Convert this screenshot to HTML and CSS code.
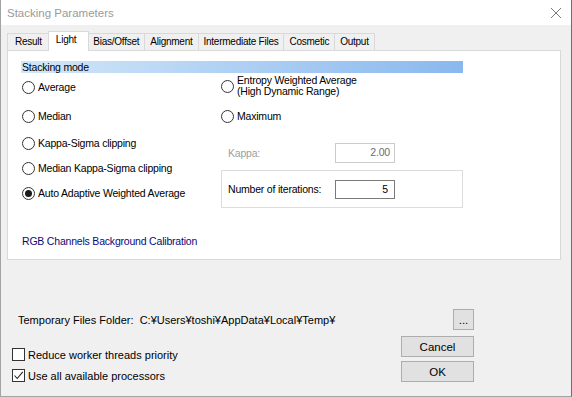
FILE: index.html
```html
<!DOCTYPE html>
<html lang="en">
<head>
  <meta charset="UTF-8">
  <title>Stacking Parameters</title>
  <link rel="stylesheet" href="styles.css">
</head>
<body>
  <div class="window">
    <div class="titlebar">
      <span class="title">Stacking Parameters</span>
      <svg class="close" width="12" height="12" viewBox="0 0 12 12">
        <path d="M1 1 L11 11 M11 1 L1 11" stroke="#7a7a7a" stroke-width="1" fill="none"/>
      </svg>
    </div>

    <div class="client">
      <div class="tabs">
        <div class="tab">Result</div>
        <div class="tab active">Light</div>
        <div class="tab">Bias/Offset</div>
        <div class="tab">Alignment</div>
        <div class="tab">Intermediate Files</div>
        <div class="tab">Cosmetic</div>
        <div class="tab">Output</div>
      </div>

      <div class="panel">
        <div class="section-head">Stacking mode</div>

        <div class="modes">
          <div class="col-left">
            <label class="radio"><span class="circle"></span>Average</label>
            <label class="radio"><span class="circle"></span>Median</label>
            <label class="radio"><span class="circle"></span>Kappa-Sigma clipping</label>
            <label class="radio"><span class="circle"></span>Median Kappa-Sigma clipping</label>
            <label class="radio checked"><span class="circle"></span>Auto Adaptive Weighted Average</label>
          </div>

          <div class="col-right">
            <label class="radio two-line">
              <span class="circle"></span>
              <span>Entropy Weighted Average<br>(High Dynamic Range)</span>
            </label>
            <label class="radio maximum"><span class="circle"></span>Maximum</label>

            <div class="field-row kappa">
              <span class="field-label disabled">Kappa:</span>
              <span class="field-input disabled">2.00</span>
            </div>

            <div class="group-box">
              <span class="field-label">Number of iterations:</span>
              <span class="field-input">5</span>
            </div>
          </div>
        </div>

        <div class="link">RGB Channels Background Calibration</div>
      </div>

      <div class="footer">
        <div class="temp-folder">Temporary Files Folder:&nbsp; C:¥Users¥toshi¥AppData¥Local¥Temp¥</div>
        <button class="btn btn-small">...</button>

        <div class="checks">
          <label class="check"><span class="box"></span>Reduce worker threads priority</label>
          <label class="check checked">
            <span class="box">
              <svg width="11" height="11" viewBox="0 0 11 11">
                <path d="M1.5 5.5 L4.2 8.5 L9.8 1.8" stroke="#222" stroke-width="1.1" fill="none"/>
              </svg>
            </span>
            Use all available processors
          </label>
        </div>

        <div class="buttons">
          <button class="btn">Cancel</button>
          <button class="btn">OK</button>
        </div>
      </div>
    </div>
  </div>
</body>
</html>
```

FILE: styles.css
```css
:root {
  --face-color: #f0f0f0;
  --tab-border: #d9d9d9;
  --text-color: #000;
  --disabled-text: #a0a0a0;
  --link-color: #0a0a78;
}

* {
  box-sizing: border-box;
  margin: 0;
  padding: 0;
}

body {
  font-family: "Liberation Sans", Arial, sans-serif;
  font-size: 11px;
  color: var(--text-color);
  background: #fff;
}

.window {
  width: 572px;
  height: 397px;
  display: flex;
  flex-direction: column;
  border: 1px solid #a3a3a3;
  border-top: none;
  border-right-color: #6f6f6f;
}

/* title bar */
.titlebar {
  height: 25px;
  background: #fff;
  display: flex;
  align-items: center;
  justify-content: space-between;
  padding: 0 9px 0 6px;
}

.title {
  color: #9a9a9a;
  font-size: 11.5px;
}

/* dialog body */
.client {
  flex: 1;
  background: var(--face-color);
  padding-top: 6px;
}

.tabs {
  display: flex;
  align-items: flex-end;
  margin-left: 6px;
  height: 19px;
  font-size: 10px;
  letter-spacing: -0.25px;
}

.tab {
  height: 17px;
  line-height: 16px;
  padding: 0 5px;
  border: 1px solid var(--tab-border);
  border-bottom: none;
  border-left: none;
  background: var(--face-color);
}

.tab:first-child {
  border-left: 1px solid var(--tab-border);
  padding: 0 6px 0 7px;
}

.tab.active {
  height: 20px;
  margin: 0 -1px -1px -1px;
  padding: 0 12px 0 7px;
  line-height: 16px;
  background: #fff;
  border-left: 1px solid var(--tab-border);
  position: relative;
  z-index: 1;
}

.panel {
  width: 554px;
  height: 210px;
  margin-left: 6px;
  background: #fff;
  border: 1px solid var(--tab-border);
  font-size: 10.5px;
  letter-spacing: -0.2px;
  display: flex;
  flex-direction: column;
}

.section-head {
  width: 442px;
  height: 12px;
  line-height: 12px;
  margin: 10px 0 0 13px;
  padding-left: 1px;
  background: linear-gradient(to right, #d2e7f8, #8ab8ee);
}

.modes {
  display: flex;
}

.col-left {
  width: 213px;
  padding: 6px 0 0 14px;
  display: grid;
  grid-template-rows: 29px 27px 25px 25px 16px;
}

.col-right {
  width: 242px;
  padding-top: 2px;
  display: flex;
  flex-direction: column;
}

.radio {
  display: flex;
  align-items: center;
  gap: 3px;
  height: 16px;
}

.circle {
  width: 13px;
  height: 13px;
  border: 1px solid #333;
  border-radius: 50%;
  background: #fff;
  display: flex;
  align-items: center;
  justify-content: center;
  flex-shrink: 0;
}

.radio.checked .circle::after {
  content: "";
  width: 7px;
  height: 7px;
  border-radius: 50%;
  background: #1a1a1a;
}

.radio.two-line {
  height: 22px;
  line-height: 11px;
}

.radio.maximum {
  margin-top: 11px;
}

.field-row {
  display: flex;
  align-items: center;
  height: 21px;
  padding-left: 7px;
}

.kappa {
  margin-top: 18px;
}

.field-label {
  width: 107px;
}

.field-label.disabled {
  color: var(--disabled-text);
}

.field-input {
  width: 60px;
  height: 20px;
  border: 1px solid #7a7a7a;
  text-align: right;
  padding-right: 6px;
  line-height: 17px;
  background: #fff;
}

.field-input.disabled {
  border-color: #cccccc;
  color: #6d6d6d;
  padding-right: 4px;
}

.group-box {
  height: 38px;
  margin-top: 7px;
  border: 1px solid #dcdcdc;
  display: flex;
  align-items: center;
  padding-left: 6px;
}

.group-box .field-input {
  height: 19px;
}

.link {
  margin: 27px 0 0 14px;
  color: var(--link-color);
}

/* lower part of the dialog */
.footer {
  display: grid;
  grid-template-columns: 1fr auto;
  row-gap: 6px;
  margin-top: 49px;
  padding: 0 97px 0 11px;
}

.temp-folder {
  align-self: center;
  padding-left: 6px;
}

.btn {
  font-family: inherit;
  font-size: 11.5px;
  width: 73px;
  height: 21px;
  background: #e1e1e1;
  border: 1px solid #adadad;
  color: #000;
}

.btn-small {
  width: 21px;
  justify-self: end;
  line-height: 12px;
}

.buttons {
  display: flex;
  flex-direction: column;
  gap: 4px;
}

.checks {
  margin-top: 8px;
}

.check {
  display: flex;
  align-items: center;
  gap: 3px;
  height: 21px;
}

.box {
  width: 13px;
  height: 13px;
  border: 1px solid #333;
  background: #fff;
  display: flex;
  align-items: center;
  justify-content: center;
}
```
